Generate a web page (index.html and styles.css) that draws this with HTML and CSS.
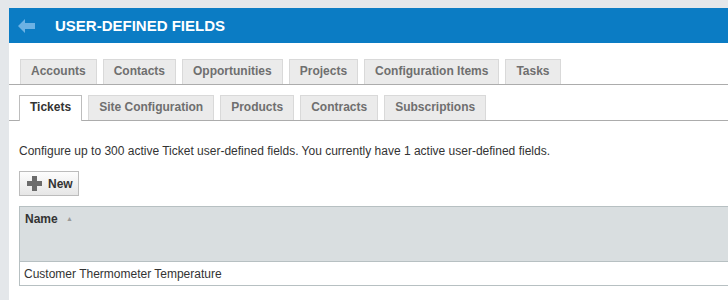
FILE: index.html
```html
<!DOCTYPE html>
<html lang="en">
<head>
  <meta charset="UTF-8" />
  <title>User-Defined Fields</title>
  <link rel="stylesheet" href="styles.css">
</head>
<body>
  <div class="page">
    <div class="title-bar">
      <a href="#" class="back-link">
        <svg width="18" height="14" viewBox="0 0 18 14"><path d="M0 7 L7 0 V4 H17 V10 H7 V14 Z" fill="#6cb2e4"/></svg>
      </a>
      <h1>USER-DEFINED FIELDS</h1>
    </div>

    <div class="tabs first-row">
      <span class="tab">Accounts</span>
      <span class="tab">Contacts</span>
      <span class="tab">Opportunities</span>
      <span class="tab">Projects</span>
      <span class="tab">Configuration Items</span>
      <span class="tab">Tasks</span>
    </div>
    <div class="tabs second-row">
      <span class="tab active">Tickets</span>
      <span class="tab">Site Configuration</span>
      <span class="tab">Products</span>
      <span class="tab">Contracts</span>
      <span class="tab">Subscriptions</span>
    </div>

    <div class="content">
      <p class="info">Configure up to 300 active Ticket user-defined fields. You currently have 1 active user-defined fields.</p>

      <button class="new-button">
        <svg width="15" height="15" viewBox="0 0 15 15"><path d="M5 0 H10 V5 H15 V10 H10 V15 H5 V10 H0 V5 H5 Z" fill="#6b6b6b"/></svg>
        New
      </button>

      <table class="grid">
        <thead>
          <tr><th>Name <span class="sort">&#9650;</span></th></tr>
        </thead>
        <tbody>
          <tr><td>Customer Thermometer Temperature</td></tr>
        </tbody>
      </table>
    </div>
  </div>
</body>
</html>
```

FILE: styles.css
```css
html, body {
  margin: 0;
  padding: 0;
  height: 300px;
  overflow: hidden;
}

body {
  background-color: #e4e7ea;
  font-family: "Liberation Sans", Arial, sans-serif;
  color: #333;
  font-size: 12px;
}

.page {
  margin: 8px 0 0 9px;
  height: 292px;
  background-color: #fff;
  overflow: hidden;
}

.title-bar {
  display: flex;
  align-items: center;
  height: 35px;
  background-color: #0b7cc4;
}

.back-link {
  display: flex;
  margin-left: 9px;
  width: 37px;
}

h1 {
  margin: 0;
  color: #fff;
  font-size: 15px;
  font-weight: bold;
}

.tabs {
  display: flex;
  align-items: flex-end;
  height: 25px;
  border-bottom: 1px solid #acacac;
}

.first-row {
  margin-top: 16px;
  padding-left: 11px;
}

.second-row {
  margin-top: 10px;
  padding-left: 10px;
}

.tab {
  box-sizing: border-box;
  height: 25px;
  line-height: 23px;
  padding: 0 10px;
  margin-right: 6px;
  background-color: #ebebeb;
  border: 1px solid #d9d9d9;
  border-bottom: none;
  color: #6f6f6f;
  font-weight: bold;
  font-size: 12px;
}

.tab.active {
  height: 26px;
  margin-bottom: -1px;
  background-color: #fff;
  border-color: #bdbdbd;
  color: #333;
}

.content {
  padding: 0 0 0 10px;
}

.info {
  margin: 0;
  padding-top: 23px;
  line-height: 14px;
}

.new-button {
  display: flex;
  align-items: center;
  gap: 6px;
  margin-top: 13px;
  height: 25px;
  width: 60px;
  padding: 0 0 0 7px;
  border: 1px solid #bcbcbc;
  background: linear-gradient(#fdfdfd, #e6e6e6);
  color: #333;
  font-family: "Liberation Sans", Arial, sans-serif;
  font-size: 12px;
  font-weight: bold;
}

.grid {
  margin-top: 10px;
  width: 110%;
  border-collapse: collapse;
}

.grid th {
  height: 55px;
  box-sizing: border-box;
  padding: 5px 5px 0;
  vertical-align: top;
  text-align: left;
  background-color: #d9dee0;
  border: 1px solid #b7c0c2;
  color: #333;
  font-size: 12px;
}

.sort {
  color: #999;
  font-size: 7px;
  margin-left: 5px;
  vertical-align: 2px;
}

.grid td {
  height: 24px;
  box-sizing: border-box;
  padding: 0 4px;
  border: 1px solid #b7c0c2;
  font-size: 12px;
}
```
